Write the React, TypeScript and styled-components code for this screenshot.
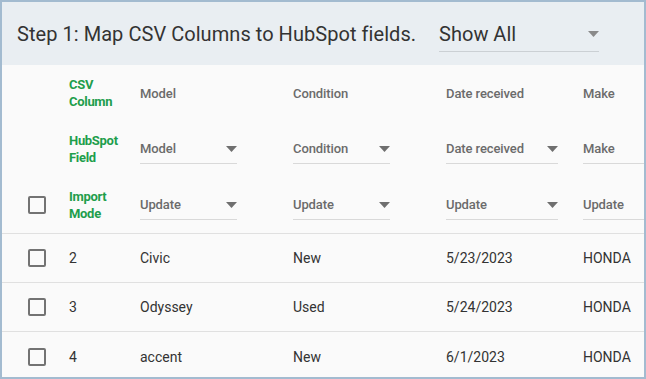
import React from "react";
import styled, { createGlobalStyle } from "styled-components";

const Global = createGlobalStyle`
  html, body { margin: 0; padding: 0; background: #fafafa; }
  * { box-sizing: border-box; }
  body { font-family: Roboto, "Noto Sans", Arial, sans-serif; }
`;

const Frame = styled.div`
  width: 646px;
  height: 379px;
  border: 2px solid #a3bbd0;
  background: #fafafa;
  overflow: hidden;
  font-family: Roboto, "Noto Sans", Arial, sans-serif;
`;

const TopBar = styled.div`
  height: 63px;
  background: #e9eef2;
  display: flex;
  align-items: center;
  padding-left: 15px;
`;

const Title = styled.div`
  font-size: 20px;
  color: #333;
  letter-spacing: 0.05px;
`;

const ShowAll = styled.div`
  margin-left: 23px;
  width: 160px;
  height: 34px;
  display: flex;
  align-items: center;
  justify-content: space-between;
  border-bottom: 1px solid #cbd0d4;
  font-size: 20px;
  color: #333;
  margin-top: 2px;
`;

const Row = styled.div<{ $h: number; $divider?: boolean }>`
  display: grid;
  grid-template-columns: 67px 71px 153px 153px 137px 1fr;
  align-items: center;
  height: ${(p) => p.$h}px;
  border-bottom: ${(p) => (p.$divider ? "1px solid #e0e0e0" : "none")};
`;

const CheckCell = styled.div`
  padding-left: 26px;
  display: flex;
  align-items: center;
`;

const Checkbox = styled.div`
  width: 18px;
  height: 18px;
  border: 2px solid #737373;
  border-radius: 2px;
`;

const Label = styled.div`
  color: #1e9e4c;
  font-size: 13px;
  font-weight: 700;
  line-height: 17px;
  letter-spacing: -0.3px;
  max-width: 56px;
`;

const ColHead = styled.div`
  color: #6b6b6b;
  font-size: 13px;
  font-weight: 500;
  letter-spacing: -0.1px;
  white-space: nowrap;
`;

const Select = styled.div<{ $w: number }>`
  width: ${(p) => p.$w}px;
  height: 30px;
  display: flex;
  align-items: center;
  justify-content: space-between;
  border-bottom: 1px solid #d9d9d9;
  color: #6b6b6b;
  font-size: 13px;
  font-weight: 500;
  letter-spacing: -0.1px;
  white-space: nowrap;
`;

const Cell = styled.div`
  color: #333;
  font-size: 14px;
  white-space: nowrap;
`;

const Caret = ({ color = "#6f6f6f" }: { color?: string }) => (
  <svg width="11" height="6" viewBox="0 0 11 6" style={{ flexShrink: 0 }}>
    <polygon points="0,0 11,0 5.5,6" fill={color} />
  </svg>
);

const cols = [
  { head: "Model", field: "Model", w: 97 },
  { head: "Condition", field: "Condition", w: 97 },
  { head: "Date received", field: "Date received", w: 112 },
  { head: "Make", field: "Make", w: 100, noCaret: true },
];

const data = [
  ["2", "Civic", "New", "5/23/2023", "HONDA"],
  ["3", "Odyssey", "Used", "5/24/2023", "HONDA"],
  ["4", "accent", "New", "6/1/2023", "HONDA"],
];

export default function App() {
  return (
    <>
      <Global />
      <Frame>
        <TopBar>
          <Title>Step 1: Map CSV Columns to HubSpot fields.</Title>
          <ShowAll>
            <span>Show All</span>
            <Caret color="#8a8a8a" />
          </ShowAll>
        </TopBar>
        <Row $h={56}>
          <div />
          <Label>CSV Column</Label>
          {cols.map((c) => (
            <ColHead key={c.head}>{c.head}</ColHead>
          ))}
        </Row>
        <Row $h={56}>
          <div />
          <Label>HubSpot Field</Label>
          {cols.map((c) => (
            <Select key={c.head} $w={c.w}>
              <span>{c.field}</span>
              {!c.noCaret && <Caret />}
            </Select>
          ))}
        </Row>
        <Row $h={57} $divider>
          <CheckCell>
            <Checkbox />
          </CheckCell>
          <Label>Import Mode</Label>
          {cols.map((c) => (
            <Select key={c.head} $w={c.w}>
              <span>Update</span>
              {!c.noCaret && <Caret />}
            </Select>
          ))}
        </Row>
        {data.map((r, i) => (
          <Row key={r[0]} $h={49} $divider={i < data.length - 1}>
            <CheckCell>
              <Checkbox />
            </CheckCell>
            {r.map((v, j) => (
              <Cell key={j}>{v}</Cell>
            ))}
          </Row>
        ))}
      </Frame>
    </>
  );
}
